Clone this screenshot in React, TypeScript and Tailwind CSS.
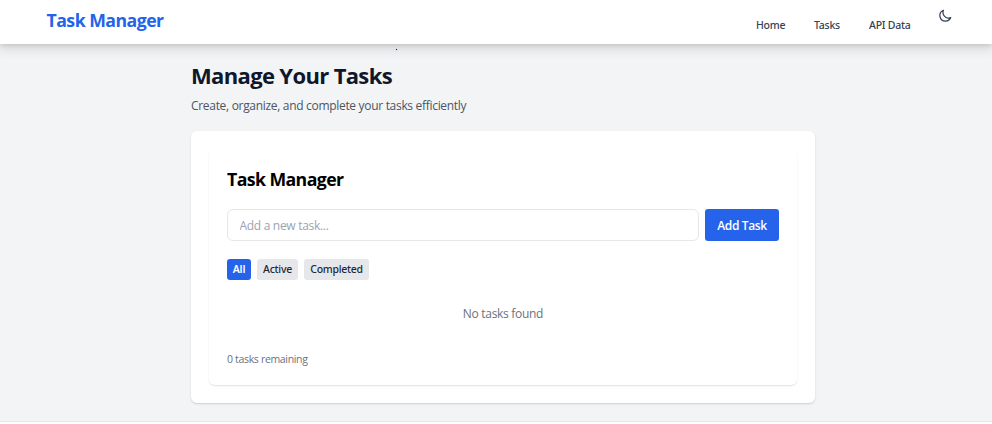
import React from "react";

const filters = [
  { label: "All", style: "w-6 bg-[#2563eb] text-white font-semibold tracking-[-0.1px]" },
  { label: "Active", style: "w-[41px] bg-gray-200 text-[#1f2937] tracking-[-0.25px]" },
  { label: "Completed", style: "w-[65px] bg-gray-200 text-[#1f2937] tracking-[-0.3px]" },
];

function Navbar() {
  return (
    <nav className="relative flex h-11 items-start justify-between bg-white pl-[46.5px] pr-[39px] shadow-[0_5px_11px_1px_rgba(0,0,0,0.1),0_2px_4px_rgba(0,0,0,0.1)]">
      <a className="mt-[8px] whitespace-nowrap text-[17.7px] font-bold leading-6 tracking-[-0.53px] text-[#2563eb]">Task Manager</a>
      <div className="flex items-start font-['Noto_Sans',sans-serif] text-[10.5px] font-medium leading-4 tracking-[-0.25px] text-[#374151]">
        <a className="mt-[17px] w-[58px] whitespace-nowrap">Home</a>
        <a className="mt-[17px] w-[55px] whitespace-nowrap">Tasks</a>
        <a className="mt-[17px] w-[69px] whitespace-nowrap">API Data</a>
        <button className="mt-[8px]" aria-label="Toggle theme">
          <svg className="h-[15px] w-[15px]" viewBox="0 0 24 24" fill="none" stroke="#374151" strokeWidth="2" strokeLinecap="round" strokeLinejoin="round">
            <path d="M20.354 15.354A9 9 0 018.646 3.646 9.003 9.003 0 0012 21a9.003 9.003 0 008.354-5.646z" />
          </svg>
        </button>
      </div>
    </nav>
  );
}

export default function App() {
  return (
    <div className="relative h-[424px] overflow-hidden bg-[#f3f4f6] font-['Open_Sans','Noto_Sans',sans-serif]">
      <Navbar />
      <span className="absolute left-[396px] top-[49px] h-px w-px bg-[#1010e0] shadow-[0_0_1px_#3030ff]" />
      <main className="ml-[191px] flex w-[624px] flex-col pt-[18px]">
        <h1 className="whitespace-nowrap text-[22px] font-bold leading-[27px] tracking-[-0.65px] text-[#0f172a]">Manage Your Tasks</h1>
        <p className="mt-2 whitespace-nowrap text-[12px] leading-[18px] tracking-[-0.31px] text-[#4b5563]">Create, organize, and complete your tasks efficiently</p>
        <section className="mt-4 h-[272px] rounded-[6px] bg-white p-[18px] shadow-[0_1px_2px_rgba(0,0,0,0.16)]">
          <div className="h-[236px] rounded-[6px] bg-white p-[18px] shadow-[0_1px_1.5px_rgba(0,0,0,0.12)]">
            <h2 className="whitespace-nowrap text-[17.7px] font-bold leading-6 tracking-[-0.58px] text-black">Task Manager</h2>
            <div className="mt-[18px] flex gap-1.5">
              <input className="h-8 w-[472px] rounded-[6px] border border-gray-200 px-[11.5px] pt-px text-[12px] tracking-[-0.3px] placeholder:text-[#9ca3af]" placeholder="Add a new task..." />
              <button className="h-8 w-[74px] whitespace-nowrap rounded-[3px] bg-[#2563eb] pt-0.5 text-[12px] font-semibold tracking-[-0.35px] text-white">Add Task</button>
            </div>
            <div className="mt-[18px] flex gap-1.5">
              {filters.map((f) => (
                <button key={f.label} className={"h-[21px] whitespace-nowrap rounded-[3px] font-['Noto_Sans',sans-serif] text-[10.5px] font-medium leading-[15px] " + f.style}>{f.label}</button>
              ))}
            </div>
            <p className="mt-[25px] text-center text-[12px] leading-[18px] tracking-[-0.3px] text-[#6b7280]">No tasks found</p>
            <p className="mt-[29px] text-[10.5px] leading-[15px] tracking-[-0.33px] text-[#6b7280]">0 tasks remaining</p>
          </div>
        </section>
      </main>
      <footer className="mt-[18px] h-3 border-t border-gray-200 bg-white" />
    </div>
  );
}
